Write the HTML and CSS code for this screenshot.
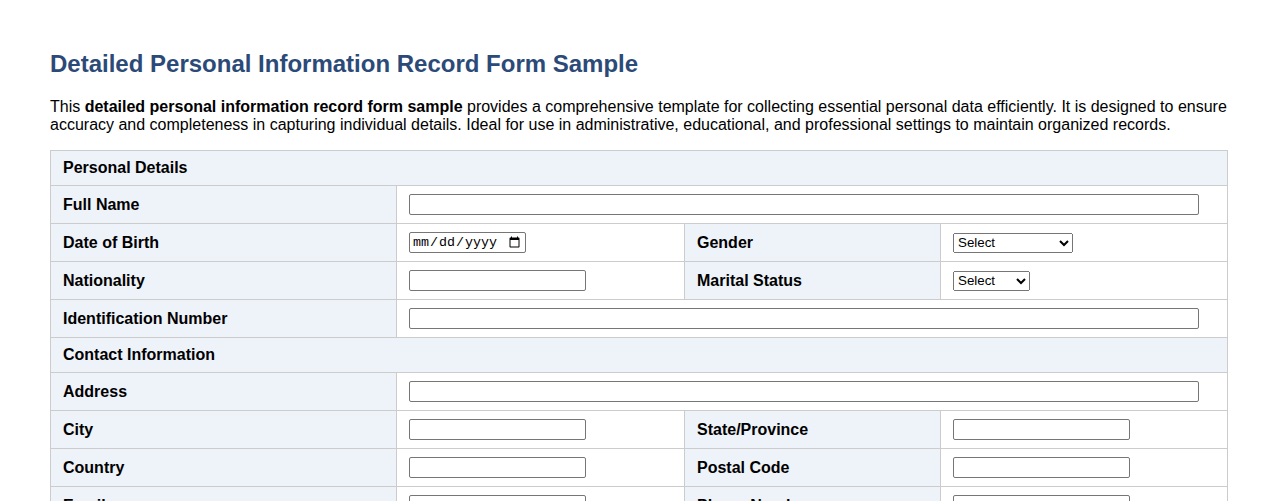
FILE: index.html
```html
<!DOCTYPE html>
<html lang="en">
<head>
<meta charset="utf-8">
<title>Detailed Personal Information Record Form Sample</title>
<link rel="stylesheet" href="styles.css">
</head>
<body>
<div class="page">
  <h1 class="title">Detailed Personal Information Record Form Sample</h1>
  <p class="intro">This <strong>detailed personal information record form sample</strong> provides a comprehensive template for collecting essential personal data efficiently. It is designed to ensure accuracy and completeness in capturing individual details. Ideal for use in administrative, educational, and professional settings to maintain organized records.</p>
  <table class="form-table">
    <colgroup>
      <col class="c1"><col class="c2"><col class="c3"><col class="c4">
    </colgroup>
    <tr class="section"><th colspan="4">Personal Details</th></tr>
    <tr>
      <th>Full Name</th>
      <td colspan="3"><input type="text" class="wide"></td>
    </tr>
    <tr>
      <th>Date of Birth</th>
      <td><input type="date" class="date"></td>
      <th>Gender</th>
      <td><select class="sel-gender"><option>Select</option><option>Male</option><option>Female</option><option>Other</option></select></td>
    </tr>
    <tr>
      <th>Nationality</th>
      <td><input type="text" class="short"></td>
      <th>Marital Status</th>
      <td><select class="sel-marital"><option>Select</option><option>Single</option><option>Married</option></select></td>
    </tr>
    <tr>
      <th>Identification Number</th>
      <td colspan="3"><input type="text" class="wide"></td>
    </tr>
    <tr class="section"><th colspan="4">Contact Information</th></tr>
    <tr>
      <th>Address</th>
      <td colspan="3"><input type="text" class="wide"></td>
    </tr>
    <tr>
      <th>City</th>
      <td><input type="text" class="short"></td>
      <th>State/Province</th>
      <td><input type="text" class="short"></td>
    </tr>
    <tr>
      <th>Country</th>
      <td><input type="text" class="short"></td>
      <th>Postal Code</th>
      <td><input type="text" class="short"></td>
    </tr>
    <tr>
      <th>Email</th>
      <td><input type="email" class="short"></td>
      <th>Phone Number</th>
      <td><input type="tel" class="short"></td>
    </tr>
  </table>
</div>
</body>
</html>
```

FILE: styles.css
```css
html, body {
  margin: 0;
  padding: 0;
  background: #ffffff;
}
body {
  font-family: "Liberation Sans", Arial, sans-serif;
  color: #000;
}
.page {
  padding: 50px 50px 40px 50px;
}
.title {
  margin: 0 0 20px 0;
  font-size: 24px;
  font-weight: bold;
  color: #2b4a78;
}
.intro {
  margin: 0 0 16px 0;
  font-size: 16px;
  line-height: 18px;
}
.form-table {
  width: 100%;
  border-collapse: collapse;
  table-layout: fixed;
  border: 1px solid #cccccc;
}
.c1 { width: 346px; }
.c2 { width: 288px; }
.c3 { width: 256px; }
.c4 { width: auto; }
.form-table th,
.form-table td {
  border: 1px solid #cccccc;
  padding: 8px 12px;
  font-size: 16px;
  line-height: 18px;
  vertical-align: middle;
  text-align: left;
}
.form-table th {
  background: #eef2f9;
  font-weight: bold;
}
.form-table td {
  background: #ffffff;
}
.form-table input,
.form-table select {
  font-family: "Liberation Sans", Arial, sans-serif;
  font-size: 13.33px;
  box-sizing: border-box;
  margin: 0;
  vertical-align: middle;
  display: block;
}
.form-table input[type="text"],
.form-table input[type="email"],
.form-table input[type="tel"] {
  height: 21px;
  border: 1px solid #767676;
  border-radius: 2px;
  padding: 1px 2px;
}
.wide { width: 790px; }
.short { width: 177px; }
.date {
  width: 117px;
  height: 21px;
  border: 1px solid #767676;
  border-radius: 2px;
  padding: 1px 2px;
  font-family: "Liberation Mono", monospace !important;
}
.sel-gender { width: 120px; height: 20px; }
.sel-marital { width: 77px; height: 20px; }
```
